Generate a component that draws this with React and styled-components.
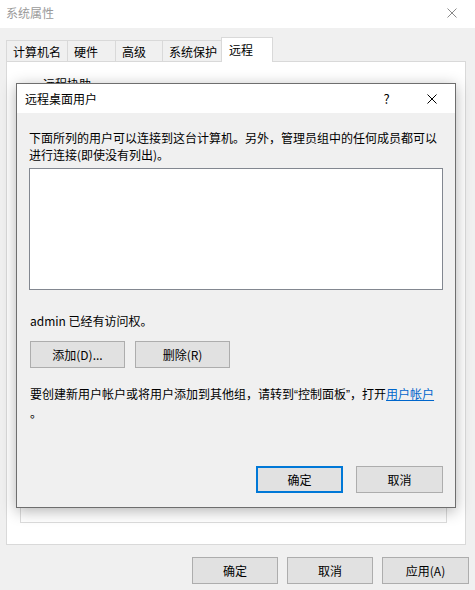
import React from "react";
import styled, { createGlobalStyle } from "styled-components";

const Global = createGlobalStyle`
  html, body { margin: 0; padding: 0; background: #f0f0f0; }
  body { font-family: "Noto Sans CJK SC", "Microsoft YaHei", sans-serif; font-size: 12px; color: #000; }
  * { box-sizing: border-box; }
`;

const Window = styled.div`
  position: relative;
  width: 475px;
  height: 590px;
  background: #f0f0f0;
  overflow: hidden;
  display: flex;
  flex-direction: column;
`;

const TitleBar = styled.div`
  height: 28px;
  background: #fff;
  display: flex;
  align-items: center;
  justify-content: space-between;
  padding: 0 0 3px 6px;
  flex-shrink: 0;
`;

const TitleText = styled.span`
  font-size: 12px;
  line-height: 17px;
  color: ${(p) => (p.$dim ? "#9a9a9a" : "#000")};
`;

const CaptionButton = styled.div`
  width: ${(p) => p.$w || 46}px;
  height: 17px;
  display: flex;
  align-items: center;
  justify-content: center;
  font-size: 13px;
  line-height: 17px;
  color: #000;
`;

const Body = styled.div`
  flex: 1;
  display: flex;
  flex-direction: column;
  padding: 9px 6px 0 6px;
`;

const TabRow = styled.div`
  display: flex;
  align-items: flex-end;
  height: 24px;
`;

const Tab = styled.div`
  position: relative;
  width: ${(p) => p.$w}px;
  height: ${(p) => (p.$active ? 25 : 21)}px;
  margin-right: -1px;
  margin-bottom: ${(p) => (p.$active ? -1 : 0)}px;
  z-index: ${(p) => (p.$active ? 2 : 1)};
  background: ${(p) => (p.$active ? "#fff" : "#f0f0f0")};
  border: 1px solid #d9d9d9;
  border-bottom: none;
  padding: ${(p) => (p.$active ? "0 0 2px 7px" : "1px 0 0 6px")};
  display: flex;
  align-items: center;
  font-size: 12px;
  line-height: 17px;
  white-space: nowrap;
`;

const Panel = styled.div`
  height: 484px;
  margin-right: 3px;
  background: #fff;
  border: 1px solid #d9d9d9;
  padding: 13px 18px 21px 13px;
  display: flex;
  flex-direction: column;
`;

const Group = styled.fieldset`
  flex: 1;
  margin: 0;
  border: 1px solid #dcdcdc;
  padding: 0 13px 13px 13px;
  display: flex;
  flex-direction: column;
  min-width: 0;
`;

const Legend = styled.legend`
  margin-left: 6px;
  padding: 0 3px;
  font-size: 12px;
  line-height: 17px;
`;

const Button = styled.div`
  width: ${(p) => p.$w}px;
  height: 27px;
  background: #e1e1e1;
  border: ${(p) => (p.$default ? "2px solid #0078d7" : "1px solid #adadad")};
  display: flex;
  align-items: center;
  justify-content: center;
  font-size: 12px;
  line-height: 17px;
  color: #000;
  white-space: nowrap;
  flex-shrink: 0;
`;

const GroupButtonRow = styled.div`
  margin-top: auto;
  display: flex;
  justify-content: flex-end;
`;

const FooterRow = styled.div`
  display: flex;
  justify-content: flex-end;
  gap: ${(p) => p.$gap || 9}px;
  margin-top: ${(p) => (p.$auto ? "auto" : `${p.$mt || 0}px`)};
  margin-left: ${(p) => p.$ml || 0}px;
  ${(p) => p.$start && "justify-content: flex-start;"}
`;

const Dialog = styled.div`
  position: absolute;
  left: 16px;
  top: 83px;
  width: 440px;
  height: 425px;
  border: 1px solid #6e6e6e;
  background: #f0f0f0;
  box-shadow: 0 3px 14px rgba(0, 0, 0, 0.3);
  display: flex;
  flex-direction: column;
  z-index: 5;
`;

const DialogTitle = styled.div`
  height: 29px;
  background: #fff;
  display: flex;
  align-items: center;
  padding-left: 8px;
  flex-shrink: 0;
`;

const Spacer = styled.div`
  flex: 1;
`;

const DialogBody = styled.div`
  flex: 1;
  display: flex;
  flex-direction: column;
  padding: 16px 12px 14px 12px;
`;

const Para = styled.div`
  font-size: 12px;
  line-height: 17px;
  white-space: nowrap;
  margin-top: ${(p) => p.$mt || 0}px;
  margin-left: ${(p) => p.$ml || 0}px;
`;

const Quote = styled.span`
  font-family: "Liberation Sans", sans-serif;
`;

const ListBox = styled.div`
  margin-top: 5px;
  height: 122px;
  background: #fff;
  border: 1px solid #828790;
`;

const Link = styled.span`
  color: #0066cc;
  text-decoration: underline;
`;

const XIcon = ({ color = "#000", size = 10 }) => (
  <svg width={size} height={size} viewBox="0 0 10 10">
    <path d="M0.5 0.5 L9.5 9.5 M9.5 0.5 L0.5 9.5" stroke={color} strokeWidth="1" fill="none" />
  </svg>
);

export default function App() {
  return (
    <>
      <Global />
      <Window>
        <TitleBar>
          <TitleText $dim>系统属性</TitleText>
          <CaptionButton $w={46}>
            <XIcon color="#8a8a8a" />
          </CaptionButton>
        </TitleBar>
        <Body>
          <TabRow>
            <Tab $w={62}>计算机名</Tab>
            <Tab $w={49}>硬件</Tab>
            <Tab $w={48}>高级</Tab>
            <Tab $w={60}>系统保护</Tab>
            <Tab $w={52} $active>
              远程
            </Tab>
          </TabRow>
          <Panel>
            <Group>
              <Legend>远程协助</Legend>
              <GroupButtonRow>
                <Button $w={107}>高级(V)...</Button>
              </GroupButtonRow>
            </Group>
          </Panel>
          <FooterRow $mt={12} $gap={9}>
            <Button $w={86}>确定</Button>
            <Button $w={86}>取消</Button>
            <Button $w={87}>应用(A)</Button>
          </FooterRow>
        </Body>

        <Dialog>
          <DialogTitle>
            <TitleText>远程桌面用户</TitleText>
            <Spacer />
            <CaptionButton $w={45}>?</CaptionButton>
            <CaptionButton $w={46}>
              <XIcon color="#000" />
            </CaptionButton>
          </DialogTitle>
          <DialogBody>
            <Para>下面所列的用户可以连接到这台计算机。另外，管理员组中的任何成员都可以</Para>
            <Para>进行连接(即使没有列出)。</Para>
            <ListBox />
            <Para $mt={22} $ml={1}>admin 已经有访问权。</Para>
            <FooterRow $start $mt={12} $gap={10} $ml={1}>
              <Button $w={95}>添加(D)...</Button>
              <Button $w={95}>删除(R)</Button>
            </FooterRow>
            <Para $mt={17} $ml={1}>
              要创建新用户帐户或将用户添加到其他组，请转到<Quote>“</Quote>控制面板<Quote>”</Quote>，打开<Link>用户帐户</Link>
            </Para>
            <Para $ml={1}>。</Para>
            <FooterRow $auto $gap={13}>
              <Button $w={87} $default>确定</Button>
              <Button $w={87}>取消</Button>
            </FooterRow>
          </DialogBody>
        </Dialog>
      </Window>
    </>
  );
}
